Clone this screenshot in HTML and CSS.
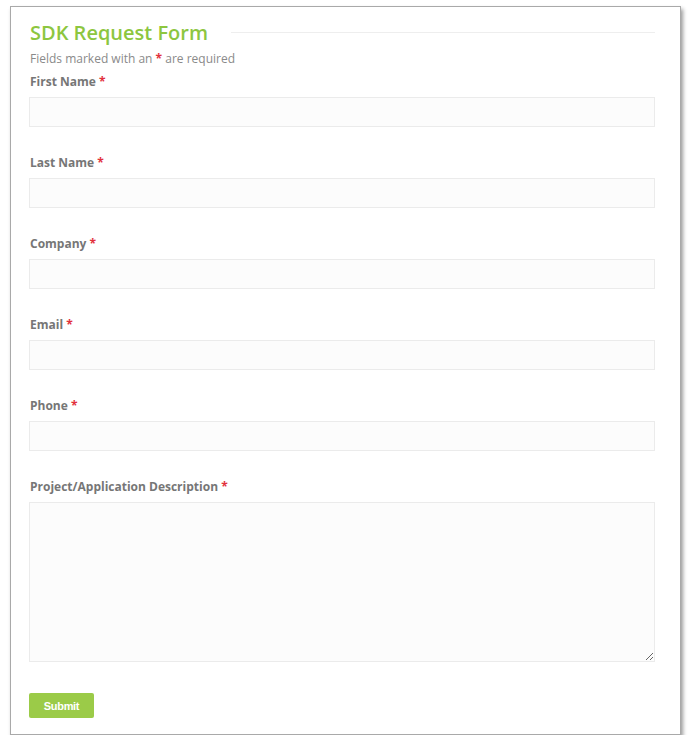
FILE: index.html
```html
<!DOCTYPE html>
<html>
<head>
<meta charset="utf-8">
<link rel="stylesheet" href="styles.css">
</head>
<body>
<div class="panel">
  <div class="title-row">
    <h1 class="title">SDK Request Form</h1>
    <div class="rule"></div>
  </div>
  <p class="note">Fields marked with an <span class="req">*</span> are required</p>
  <form class="form">
    <div class="field">
      <label class="label">First Name <span class="req">*</span></label>
      <input class="input" type="text">
    </div>
    <div class="field">
      <label class="label">Last Name <span class="req">*</span></label>
      <input class="input" type="text">
    </div>
    <div class="field">
      <label class="label">Company <span class="req">*</span></label>
      <input class="input" type="text">
    </div>
    <div class="field">
      <label class="label">Email <span class="req">*</span></label>
      <input class="input" type="text">
    </div>
    <div class="field">
      <label class="label">Phone <span class="req">*</span></label>
      <input class="input" type="text">
    </div>
    <div class="field field-last">
      <label class="label">Project/Application Description <span class="req">*</span></label>
      <textarea class="input textarea"></textarea>
    </div>
    <button class="submit" type="button">Submit</button>
  </form>
</div>
</body>
</html>
```
FILE: styles.css
```css
* { box-sizing: border-box; }
html, body { margin: 0; padding: 0; background: #fff; }
body { font-family: "Open Sans", "Liberation Sans", sans-serif; }

.panel {
  margin: 6px 0 0 10px;
  width: 671px;
  height: 729px;
  border: 1px solid #a9a9a9;
  background: #fff;
  box-shadow: 2px 3px 4px rgba(0, 0, 0, 0.4);
  padding: 13px 25px 0 18px;
}

.title-row {
  display: flex;
  align-items: center;
  padding-left: 1px;
}
.title {
  margin: 0;
  font-size: 20px;
  font-weight: 600;
  line-height: 26px;
  color: #8dc63f;
}
.rule {
  flex: 1;
  margin-left: 23px;
  border-top: 1px solid #eeeeee;
  margin-top: -2px;
}

.note {
  margin: 4px 0 0 1px;
  font-size: 12px;
  line-height: 18px;
  color: #8a8a8a;
}
.req { color: #e2313c; font-weight: 700; }

.form { margin-top: 5px; }
.field { margin-bottom: 27px; }
.field-last { margin-bottom: 31px; }

.label {
  display: block;
  margin-left: 1px;
  font-size: 12px;
  font-weight: 700;
  line-height: 18px;
  color: #767676;
}
.input {
  display: block;
  width: 100%;
  height: 30px;
  margin-top: 6px;
  border: 1px solid #ebebeb;
  background: #fcfcfc;
  border-radius: 0;
  outline: none;
  font-family: inherit;
}
.textarea {
  height: 160px;
  margin-top: 6px;
  resize: both;
}

.submit {
  display: block;
  width: 65px;
  height: 25px;
  border: none;
  border-radius: 2px;
  background: #9bcb48;
  color: #fff;
  font-family: "Liberation Sans", Arial, sans-serif;
  font-weight: 700;
  font-size: 11px;
  padding: 0;
  letter-spacing: -0.3px;
}
```
